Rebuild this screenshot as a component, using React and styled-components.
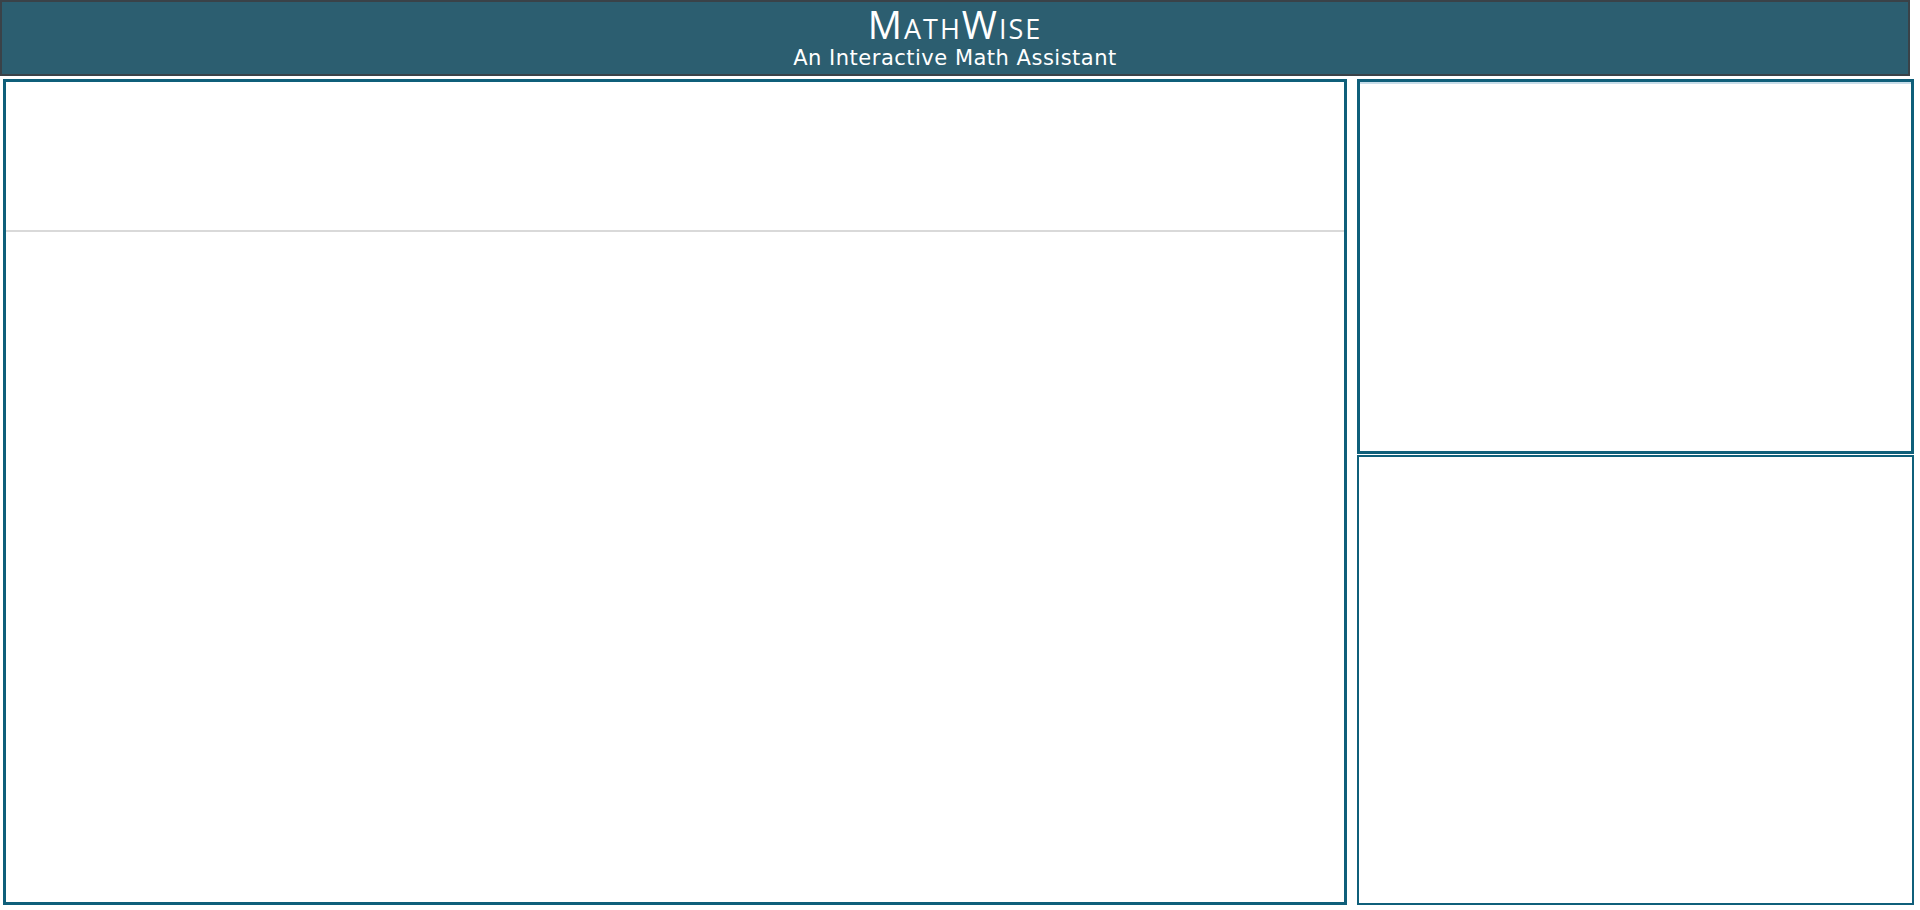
import React from "react";
import styled, { createGlobalStyle } from "styled-components";

const Global = createGlobalStyle`
  html, body { margin: 0; padding: 0; background: #ffffff; }
  body { font-family: "Open Sans", "Liberation Sans", sans-serif; }
  * { box-sizing: border-box; }
`;

const Page = styled.div`
  width: 1920px;
  height: 910px;
  display: flex;
  flex-direction: column;
`;

const Header = styled.header`
  width: 1910px;
  height: 76px;
  background: #2c5e70;
  border: 2px solid #3a4248;
  display: flex;
  flex-direction: column;
  align-items: center;
  color: #ffffff;
`;

const Title = styled.h1`
  margin: 0;
  font-family: "Open Sans", sans-serif;
  font-weight: 400;
  font-size: 38px;
  line-height: 44px;
  font-variant: small-caps;
  letter-spacing: 2px;
`;

const Subtitle = styled.div`
  font-family: "DejaVu Sans", cursive;
  font-weight: 400;
  font-size: 21px;
  line-height: 24px;
  letter-spacing: 0.5px;
  color: #ffffff;
`;

const Main = styled.main`
  display: flex;
  gap: 10px;
  padding: 3px 0 0 3px;
  height: 829px;
`;

const WorkPanel = styled.section`
  width: 1344px;
  height: 826px;
  border: 3px solid #0f5f7a;
  display: flex;
  flex-direction: column;
`;

const InputArea = styled.div`
  height: 150px;
  border-bottom: 2px solid #d9d9d9;
`;

const Side = styled.div`
  width: 557px;
  display: flex;
  flex-direction: column;
  gap: 1px;
`;

const SidePanel = styled.section`
  height: ${(p) => p.$h}px;
  border: ${(p) => p.$b}px solid #0f5f7a;
  box-shadow: ${(p) => (p.$glow ? "inset 0 2px 0 #c8dde9" : "none")};
`;

export default function App() {
  return (
    <>
      <Global />
      <Page>
        <Header>
          <Title>MathWise</Title>
          <Subtitle>An Interactive Math Assistant</Subtitle>
        </Header>
        <Main>
          <WorkPanel>
            <InputArea />
          </WorkPanel>
          <Side>
            <SidePanel $h={375} $b={3} $glow />
            <SidePanel $h={450} $b={2} />
          </Side>
        </Main>
      </Page>
    </>
  );
}
